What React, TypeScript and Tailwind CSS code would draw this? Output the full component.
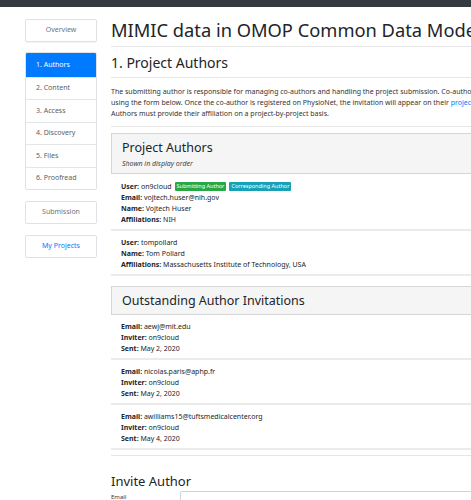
import React from 'react';

type Author = {
  user: string;
  email?: string;
  name: string;
  affiliations: string;
  submitting?: boolean;
  corresponding?: boolean;
};

type Invitation = {
  email: string;
  inviter: string;
  sent: string;
};

const steps = ['1. Authors', '2. Content', '3. Access', '4. Discovery', '5. Files', '6. Proofread'];

const authors: Author[] = [
  {
    user: 'on9cloud',
    email: 'vojtech.huser@nih.gov',
    name: 'Vojtech Huser',
    affiliations: 'NIH',
    submitting: true,
    corresponding: true,
  },
  {
    user: 'tompollard',
    name: 'Tom Pollard',
    affiliations: 'Massachusetts Institute of Technology, USA',
  },
];

const invitations: Invitation[] = [
  { email: 'aewj@mit.edu', inviter: 'on9cloud', sent: 'May 2, 2020' },
  { email: 'nicolas.paris@aphp.fr', inviter: 'on9cloud', sent: 'May 2, 2020' },
  { email: 'awilliams15@tuftsmedicalcenter.org', inviter: 'on9cloud', sent: 'May 4, 2020' },
];

const Field = ({ label, children }: { label: string; children: React.ReactNode }) => (
  <div className="whitespace-nowrap">
    <span className="font-bold">{label}:</span> {children}
  </div>
);

export default function App() {
  return (
    <div className="w-[471px] h-[500px] overflow-hidden bg-white font-['Noto_Sans',sans-serif] text-[#212529]">
      <div className="h-[7px] bg-[#343a40]" />

      <div className="flex pt-[12px]">
        {/* step navigation */}
        <aside className="ml-[25px] w-[72px] shrink-0 flex flex-col text-[7px]">
          <div className="h-[23px] flex items-center justify-center border border-[#dee2e6] rounded-[2px] text-[#6c757d] shadow-[0_1px_1px_rgba(0,0,0,0.04)]">
            Overview
          </div>

          <div className="mt-[10px] flex flex-col border border-[#dee2e6] rounded-[2px] overflow-hidden">
            {steps.map((step, i) => (
              <div
                key={step}
                className={
                  i === 0
                    ? 'h-[23.5px] flex items-center pl-[10px] bg-[#007bff] text-white'
                    : 'h-[22.5px] flex items-center pl-[10px] border-t border-[#e3e6e9] text-[#5a6168]'
                }
              >
                {step}
              </div>
            ))}
          </div>

          <div className="mt-[11px] h-[23px] flex items-center justify-center border border-[#dee2e6] rounded-[2px] text-[#6c757d]">
            Submission
          </div>
          <div className="mt-[11px] h-[23px] flex items-center justify-center border border-[#dee2e6] rounded-[2px] text-[#007bff]">
            My Projects
          </div>
        </aside>

        {/* main column, wider than the window */}
        <main className="ml-[14px] w-[520px] shrink-0">
          <h1 className="-mt-[1px] text-[18.3px] leading-[23px] whitespace-nowrap">
            MIMIC data in OMOP Common Data Model
          </h1>
          <hr className="mt-[5px] border-t border-[#e6e6e6]" />

          <h2 className="mt-[7px] text-[14px] leading-[18px]">1. Project Authors</h2>
          <hr className="mt-[5px] border-t border-[#e6e6e6]" />

          <p className="mt-[7.5px] text-[7px] leading-[11px] text-[#333] whitespace-nowrap">
            The submitting author is responsible for managing co-authors and handling the project submission. Co-authors can be invited
            <br />
            using the form below. Once the co-author is registered on PhysioNet, the invitation will appear on their{' '}
            <span className="text-[#007bff]">project home page</span>.
            <br />
            Authors must provide their affiliation on a project-by-project basis.
          </p>
          <hr className="mt-[7.5px] border-t border-[#e6e6e6]" />

          <section className="mt-[6px]">
            <div className="border border-[#d6d6d6] bg-[#f5f5f5] pl-[10px] pt-[6px] pb-[4.5px]">
              <h3 className="text-[12.5px] leading-[15px]">Project Authors</h3>
              <div className="mt-[2.5px] text-[7px] leading-[11px] italic text-[#444]">Shown in display order</div>
            </div>
            {authors.map(a => (
              <div key={a.user} className="pl-[10px] pt-[6.5px] pb-[4px] border-b-2 border-[#ebebeb] text-[7px] leading-[11px]">
                <div className="flex items-center whitespace-nowrap">
                  <span className="font-bold">User:</span>&nbsp;{a.user}
                  {a.submitting && (
                    <span className="ml-[3px] h-[9px] px-[2px] flex items-center rounded-[1px] bg-[#28a745] text-white text-[5.5px]">
                      Submitting Author
                    </span>
                  )}
                  {a.corresponding && (
                    <span className="ml-[3px] h-[9px] px-[2px] flex items-center rounded-[1px] bg-[#17a2b8] text-white text-[5.5px]">
                      Corresponding Author
                    </span>
                  )}
                </div>
                {a.email && <Field label="Email">{a.email}</Field>}
                <Field label="Name">{a.name}</Field>
                <Field label="Affiliations">{a.affiliations}</Field>
              </div>
            ))}
          </section>

          <section className="mt-[9.5px]">
            <div className="border border-[#d6d6d6] bg-[#f5f5f5] pl-[10px] pt-[6px] pb-[6px]">
              <h3 className="text-[12.5px] leading-[15px]">Outstanding Author Invitations</h3>
            </div>
            {invitations.map(inv => (
              <div key={inv.email} className="pl-[10px] pt-[6px] pb-[4px] border-b-2 border-[#ebebeb] text-[7px] leading-[11px]">
                <Field label="Email">{inv.email}</Field>
                <Field label="Inviter">{inv.inviter}</Field>
                <Field label="Sent">{inv.sent}</Field>
              </div>
            ))}
          </section>
          <hr className="mt-[5px] border-t border-[#e6e6e6]" />

          <h3 className="mt-[17px] text-[13px] leading-[16px]">Invite Author</h3>
          <div className="mt-[2.5px] flex items-start">
            <label className="w-[69px] pt-[2px] text-[6px] leading-[8px] text-[#333]">Email</label>
            <div className="flex-1 h-[20px] border border-[#ced4da] rounded-[2px]" />
          </div>
        </main>
      </div>
    </div>
  );
}
